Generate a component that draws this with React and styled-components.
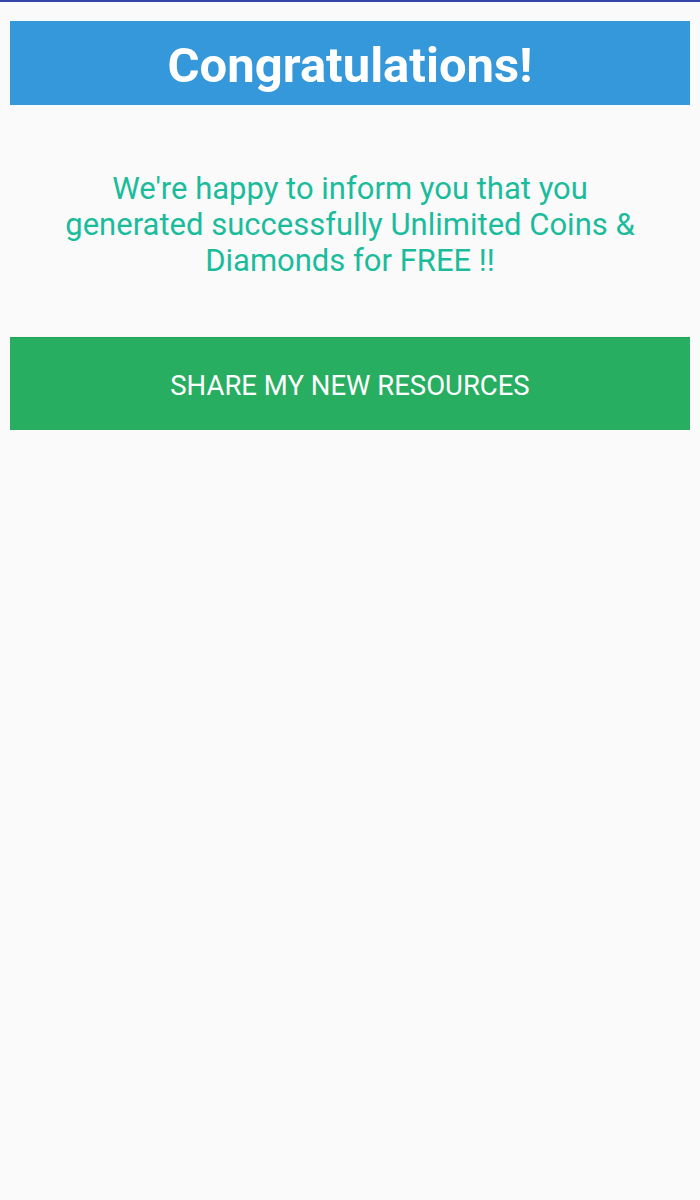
import React from "react";
import styled, { createGlobalStyle } from "styled-components";

const GlobalStyle = createGlobalStyle`
    body {
        margin: 0;
        background: #fafafa;
        font-family: Roboto, "Noto Sans", sans-serif;
    }
`

const Page = styled.div`
    min-height: 1200px;
    background: #fafafa;
    border-top: 2px solid #3546a8;
    box-sizing: border-box;
    padding: 19px 10px 0 10px;
    display: flex;
    flex-direction: column;
`

const Header = styled.div`
    background-color: #3498db;
    height: 84px;
    box-sizing: border-box;
    padding-top: 4px;
    display: flex;
    align-items: center;
    justify-content: center;
`

const Title = styled.h1`
    margin: 0;
    color: #fff;
    font-size: 49px;
    font-weight: 700;
`

const Message = styled.p`
    margin: 66px 50px 0 50px;
    color: #1abc9c;
    font-size: 31px;
    line-height: 36px;
    text-align: center;
`

const ShareButton = styled.button`
    margin-top: 58px;
    height: 93px;
    padding-top: 4px;
    border: none;
    background-color: #27ae60;
    color: #fff;
    font-family: Roboto, sans-serif;
    font-size: 27.5px;
    text-transform: uppercase;
    cursor: pointer;
    border-top: 1px solid #1ea552;
`

export default function App() {
    return (
        <>
            <GlobalStyle />
            <Page>
                <Header>
                    <Title>Congratulations!</Title>
                </Header>
                <Message>
                    We're happy to inform you that you generated successfully Unlimited Coins &amp; Diamonds for FREE !!
                </Message>
                <ShareButton>Share my new resources</ShareButton>
            </Page>
        </>
    );
}
